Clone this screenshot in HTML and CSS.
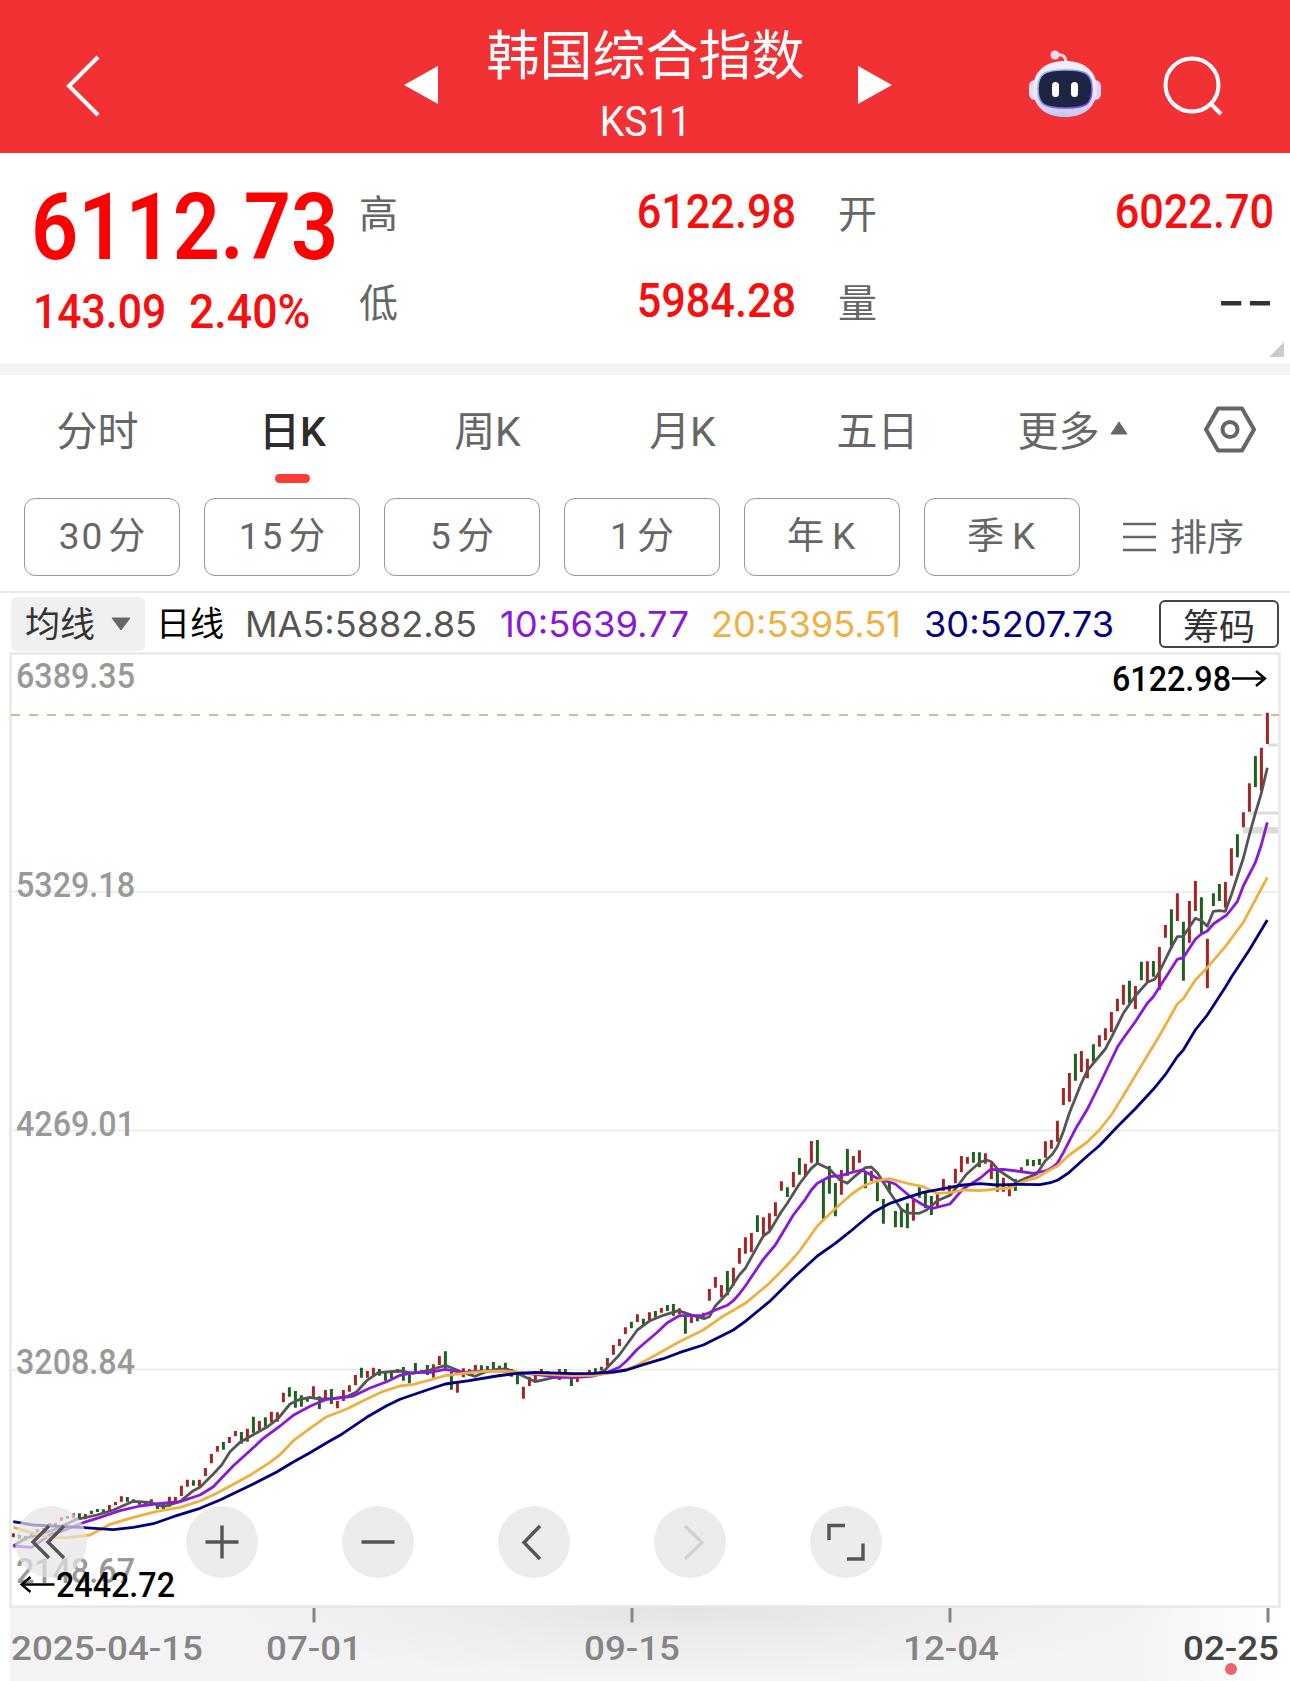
FILE: index.html
```html
<!DOCTYPE html>
<html lang="zh-CN">
<head>
  <meta charset="UTF-8" />
  <meta name="viewport" content="width=device-width, initial-scale=1.0" />
  <title>韩国综合指数 KS11</title>
  <link rel="stylesheet" href="styles.css">
</head>
<body>
  <header class="topbar">
    <svg class="back" width="40" height="66" viewBox="0 0 40 66"><path d="M34 4L5 33L34 62" /></svg>
    <svg class="prev" width="34" height="38" viewBox="0 0 34 38"><path d="M34 0V38L0 19Z" /></svg>
    <div class="title">
      <h1>韩国综合指数</h1>
      <p>KS11</p>
    </div>
    <svg class="next" width="34" height="38" viewBox="0 0 34 38"><path d="M0 0V38L34 19Z" /></svg>
    <svg class="robot" width="74" height="68" viewBox="0 0 74 68">
      <defs>
        <linearGradient id="shell" x1="0" y1="0" x2="0" y2="1">
          <stop offset="0" stop-color="#f3eef9" />
          <stop offset=".6" stop-color="#ece7fa" />
          <stop offset="1" stop-color="#c5c5f3" />
        </linearGradient>
        <linearGradient id="rim" x1="0" y1="0" x2="1" y2="1">
          <stop offset="0" stop-color="#8fd0ef" />
          <stop offset="1" stop-color="#7a35dd" />
        </linearGradient>
      </defs>
      <path d="M28 5Q38 3 38 13" fill="none" stroke="#f0d5e8" stroke-width="3" />
      <circle cx="27" cy="5" r="4.5" fill="#f3dcef" />
      <rect x="1" y="30" width="14" height="20" rx="6" fill="#e3defa" />
      <rect x="59" y="30" width="14" height="20" rx="6" fill="#d9d3f8" />
      <path d="M37 11C56 11 69 21 69 39C69 57 56 67 37 67C18 67 5 57 5 39C5 21 18 11 37 11Z" fill="url(#shell)" />
      <path d="M37 20C57 20 64 23 64 39C64 55 57 58 37 58C17 58 10 55 10 39C10 23 17 20 37 20Z" fill="#1d2444" stroke="url(#rim)" stroke-width="1.6" />
      <rect x="24" y="32" width="7" height="15" rx="3.5" fill="#fff" />
      <rect x="43" y="32" width="7" height="15" rx="3.5" fill="#fff" />
    </svg>
    <svg class="search" width="62" height="62" viewBox="0 0 62 62"><circle cx="30" cy="30" r="26.5" /><path d="M48 48L59 59" /></svg>
  </header>

  <section class="quote">
    <div class="price">
      <div class="last num">6112.73</div>
      <div class="change"><span class="num">143.09</span><span class="num">2.40%</span></div>
    </div>
    <div class="cell"><span>高</span><b class="num">6122.98</b></div>
    <div class="cell"><span>开</span><b class="num">6022.70</b></div>
    <div class="cell"><span>低</span><b class="num">5984.28</b></div>
    <div class="cell"><span>量</span><b class="num empty">--</b></div>
    <span class="corner"></span>
  </section>

  <nav class="tabs">
    <a>分时</a>
    <a class="active">日K</a>
    <a>周K</a>
    <a>月K</a>
    <a>五日</a>
    <a class="more">更多<svg width="18" height="14" viewBox="0 0 18 14"><path d="M9 1L17 13H1Z" /></svg></a>
    <svg class="setting" width="52" height="47" viewBox="0 0 52 47">
      <path d="M14 2.5H38L50 23.5L38 44.5H14L2 23.5Z" />
      <circle cx="26" cy="23.5" r="7.5" />
    </svg>
  </nav>

  <div class="periods">
    <button><span>30</span>分</button>
    <button><span>15</span>分</button>
    <button><span>5</span>分</button>
    <button><span>1</span>分</button>
    <button>年<span class="k">K</span></button>
    <button>季<span class="k">K</span></button>
    <a class="sort">
      <svg width="33" height="32" viewBox="0 0 33 32"><path d="M0 3H33M0 16H33M0 29H33" /></svg><span>排序</span>
    </a>
  </div>

  <div class="ma-bar">
    <span class="ma-select"><span>均线</span><svg width="20" height="14" viewBox="0 0 20 14"><path d="M1 1H19L10 13Z" /></svg></span>
    <span class="ma-type">日线</span>
    <svg class="ma-values" width="880" height="54" viewBox="0 0 880 54">
      <text class="ma5" x="7" y="40" textLength="232" lengthAdjust="spacingAndGlyphs">MA5:5882.85</text>
      <text class="ma10" x="262" y="40" textLength="189" lengthAdjust="spacingAndGlyphs">10:5639.77</text>
      <text class="ma20" x="473" y="40" textLength="190" lengthAdjust="spacingAndGlyphs">20:5395.51</text>
      <text class="ma30" x="686" y="40" textLength="190" lengthAdjust="spacingAndGlyphs">30:5207.73</text>
    </svg>
    <button class="chips">筹码</button>
  </div>

  <main class="chart">
    <svg class="plot" width="1290" height="1029" viewBox="0 652 1290 1029">
      <defs>
        <linearGradient id="axis-x">
          <stop offset="0" stop-color="#f4f4f4" />
          <stop offset=".88" stop-color="#f4f4f4" />
          <stop offset="1" stop-color="#fff" />
        </linearGradient>
        <radialGradient id="axis-shade" cx=".5" cy="0" r="1" gradientTransform="translate(.5 0) scale(.5 1) translate(-.5 0)">
          <stop offset="0" stop-color="#000" stop-opacity=".07" />
          <stop offset=".5" stop-color="#000" stop-opacity=".03" />
          <stop offset="1" stop-color="#000" stop-opacity="0" />
        </radialGradient>
      </defs>
      <rect x="10" y="1607" width="1280" height="74" fill="url(#axis-x)" />
      <rect x="190" y="1607" width="1000" height="74" fill="url(#axis-shade)" />

      <path class="frame" d="M10.5 653.5H1279.5V1606.5H10.5Z" />
      <path class="grid" d="M12 891.8H1278M12 1130.5H1278M12 1369.5H1278" />

      <g class="y-label">
        <text x="16" y="688" textLength="119" lengthAdjust="spacingAndGlyphs">6389.35</text>
        <text x="16" y="897" textLength="119" lengthAdjust="spacingAndGlyphs">5329.18</text>
        <text x="16" y="1136" textLength="119" lengthAdjust="spacingAndGlyphs">4269.01</text>
        <text x="16" y="1374" textLength="119" lengthAdjust="spacingAndGlyphs">3208.84</text>
        <text x="16" y="1583" textLength="119" lengthAdjust="spacingAndGlyphs">2148.67</text>
      </g>

      <path class="current" d="M11 715H1279" />
      <path d="M1268 743.5H1278V746.5H1268ZM1250 811.5H1278V814.5H1250ZM1243 827H1278V833.5H1243Z" fill="#dcdcdc" />

      <path class="bars up" id="up" />
      <path class="bars down" id="down" />
      <polyline class="line ma5" id="ma5" />
      <polyline class="line ma10" id="ma10" />
      <polyline class="line ma20" id="ma20" />
      <polyline class="line ma30" id="ma30" />

      <text class="mark" x="1112" y="691" textLength="119" lengthAdjust="spacingAndGlyphs">6122.98</text>
      <path class="arrow" d="M1232 678.5H1264M1256 671L1265 678.5L1256 686" />

      <path class="ticks" d="M314 1608V1622.5M632 1608V1622.5M950 1608V1622.5M1268 1608V1622.5" />
      <g class="x-label">
        <text x="11" y="1660" textLength="192" lengthAdjust="spacingAndGlyphs">2025-04-15</text>
        <text x="266" y="1660" textLength="96" lengthAdjust="spacingAndGlyphs">07-01</text>
        <text x="584" y="1660" textLength="96" lengthAdjust="spacingAndGlyphs">09-15</text>
        <text x="903" y="1660" textLength="96" lengthAdjust="spacingAndGlyphs">12-04</text>
        <text class="today" x="1183" y="1660" textLength="96" lengthAdjust="spacingAndGlyphs">02-25</text>
      </g>
      <circle cx="1231" cy="1669" r="6" fill="#ec6467" />
    </svg>

    <div class="controls">
      <svg viewBox="0 0 72 72"><path d="M34 20L18 36L34 52M49 20L33 36L49 52" /></svg>
      <svg viewBox="0 0 72 72"><path d="M19.5 36H52.5M36 19.5V52.5" /></svg>
      <svg viewBox="0 0 72 72"><path d="M19.5 36H52.5" /></svg>
      <svg viewBox="0 0 72 72"><path d="M42 20L26 36.5L42 53" /></svg>
      <svg class="off" viewBox="0 0 72 72"><path d="M31 20L48 36.5L31 53" /></svg>
      <svg viewBox="0 0 72 72"><path d="M19 34V19.5H35M37 53H53V37.5" /></svg>
    </div>

    <svg class="low-mark" width="170" height="50" viewBox="20 1560 170 50">
      <path class="arrow" d="M22 1584.5H54.5M30.5 1577L21.5 1584.5L30.5 1592" />
      <text class="mark" x="56" y="1597" textLength="119" lengthAdjust="spacingAndGlyphs">2442.72</text>
    </svg>
  </main>
  <script src="chart.js"></script>
</body>
</html>
```

FILE: styles.css
```css
* {
  margin: 0;
  padding: 0;
  box-sizing: border-box;
}

body {
  width: 1290px;
  height: 1681px;
  overflow: hidden;
  background: #fff;
  color: #666;
  font-family: Roboto, "Noto Sans CJK SC", sans-serif;
}

svg {
  display: block;
  flex: none;
}

/* top bar */
.topbar {
  display: flex;
  align-items: center;
  height: 153px;
  padding: 18px 63px 0 64px;
  background: #f23135;
  color: #fff;
}

.topbar svg {
  fill: #fff;
}

.topbar .back,
.topbar .search {
  fill: none;
  stroke: #fff;
  stroke-width: 4;
}

.prev {
  margin-left: 300px;
}

.topbar .prev,
.topbar .next {
  margin-bottom: 2px;
}

.title {
  width: 420px;
  padding-right: 5px;
  text-align: center;
  margin-top: 6px;
}

.title h1 {
  font-size: 53px;
  font-weight: 400;
  line-height: 66px;
}

.title p {
  font-size: 42px;
  line-height: 64px;
  transform: scaleX(0.93);
}

.robot {
  margin: 0 0 4px 136px;
}

.search {
  margin-left: 60px;
}

/* quote */
.quote {
  position: relative;
  display: grid;
  grid-template-columns: 326px 437px 478px;
  grid-template-rows: 89px 89px;
  height: 222px;
  padding: 14px 16px 0 33px;
  border-bottom: 12px solid #f4f4f4;
}

.num {
  display: inline-block;
  color: #f50f0f;
  font-weight: 500;
  transform: scaleX(0.9);
  transform-origin: right;
  white-space: nowrap;
}

.price {
  grid-row: span 2;
}

.price .num {
  transform-origin: left;
}

.price .last {
  display: block;
  margin: 15px 0 0 -2px;
  font-size: 93px;
  line-height: 92px;
  font-weight: 600;
  color: #f00;
  transform: scaleX(0.89);
}

.change {
  display: flex;
  gap: 11px;
  margin-top: -8px;
  font-size: 48px;
  line-height: 92px;
}

.change .num:first-child {
  width: 145px;
}

.change .num {
  transform: scaleX(0.89);
}

.change .num:last-child {
  transform: scaleX(0.93);
}

.cell {
  display: flex;
  align-items: center;
  justify-content: space-between;
  font-size: 39px;
}

.cell > span {
  margin-top: -2px;
}

.cell .num {
  font-size: 48px;
}

.cell:nth-child(odd) {
  margin-left: 42px;
}

.cell .empty {
  color: #333;
  font-family: Inter, sans-serif;
  transform: scaleX(1.3);
}

.corner {
  position: absolute;
  right: 6px;
  bottom: 6px;
  border-left: 15px solid transparent;
  border-bottom: 15px solid #ccc;
}

/* tabs */
.tabs {
  display: flex;
  align-items: center;
  height: 109px;
}

.tabs a {
  position: relative;
  width: 195px;
  padding-bottom: 4px;
  text-align: center;
  font-size: 41px;
}

.tabs .active {
  color: #2c2c2c;
  font-weight: 500;
}

.active::after {
  content: "";
  position: absolute;
  left: 80px;
  bottom: -21px;
  width: 35px;
  height: 9px;
  border-radius: 5px;
  background: #fa3c34;
}

.more {
  display: flex;
  align-items: center;
  justify-content: center;
  gap: 10px;
}

.more svg,
.ma-select svg {
  fill: #666;
  stroke: #666;
  stroke-linejoin: round;
}

.setting {
  margin-left: 34px;
  fill: none;
  stroke: #666;
  stroke-width: 4;
  stroke-linejoin: round;
}

/* periods */
.periods {
  display: flex;
  align-items: center;
  gap: 24px;
  height: 109px;
  padding: 0 24px 2px;
  border-bottom: 2px solid #e8e8e8;
}

.periods button {
  width: 156px;
  height: 78px;
  border: 1.5px solid #999;
  border-radius: 11px;
  background: none;
  color: #666;
  font: 37px/72px Roboto, "Noto Sans CJK SC", sans-serif;
}

.periods button span {
  margin-right: 4px;
  letter-spacing: 2px;
}

.periods button .k {
  margin: 0 0 0 8px;
}

.sort {
  display: flex;
  align-items: center;
  gap: 14px;
  margin-left: 19px;
  font-size: 37px;
}

.sort span {
  margin-top: -3px;
}

.sort svg {
  stroke: #666;
  stroke-width: 2.6;
}

/* moving averages */
.ma-bar {
  display: flex;
  align-items: center;
  height: 59px;
  padding: 2px 11px 0;
}

.ma-select {
  display: flex;
  align-items: center;
  gap: 16px;
  width: 134px;
  height: 54px;
  padding-left: 14px;
  border-radius: 6px;
  background: #f0f0f0;
  color: #333;
  font-size: 35px;
}

.ma-select span,
.ma-type {
  margin-top: -4px;
}

.ma-type {
  width: 80px;
  padding-left: 11px;
  color: #000;
  font-size: 34px;
  white-space: nowrap;
}

.ma-values {
  margin-left: 13px;
  font-family: Inter, Roboto, sans-serif;
  font-size: 35px;
}

text.ma5 { fill: #555; }
text.ma10 { fill: #8a18d8; }
text.ma20 { fill: #f0b040; }
text.ma30 { fill: #000080; }

.chips {
  width: 120px;
  height: 48px;
  margin-left: auto;
  border: 2px solid #444;
  border-radius: 6px;
  background: #fff;
  color: #333;
  font: 36px/38px "Noto Sans CJK SC", sans-serif;
}

/* chart */
.chart {
  position: relative;
}

.frame,
.grid {
  fill: none;
  stroke: #e8e8e8;
  stroke-width: 2.5;
}

.grid {
  stroke-width: 1.6;
}

.y-label,
.x-label,
.mark {
  font-size: 35px;
  font-weight: 500;
  fill: #999;
}

.x-label {
  font-size: 34px;
  fill: #858585;
}

.x-label .today {
  fill: #444;
}

.mark {
  fill: #000;
}

.arrow {
  fill: none;
  stroke: #000;
  stroke-width: 2.4;
}

.current {
  stroke: #cfa277;
  stroke-width: 1.4;
  stroke-dasharray: 9 9;
}

.bars {
  stroke-width: 3;
}

.up { stroke: #a52424; }
.down { stroke: #1c621c; }

.line {
  fill: none;
  stroke-width: 2.8;
  stroke-linejoin: round;
}

.line.ma5 { stroke: #555; }
.line.ma10 { stroke: #8a18d8; }
.line.ma20 { stroke: #f0b040; }
.line.ma30 { stroke: #000080; }

.ticks {
  stroke: #858585;
  stroke-width: 3;
}

/* buttons floating over the chart */
.controls {
  position: absolute;
  left: 15px;
  top: 854px;
  display: flex;
  gap: 84px;
}

.controls svg {
  width: 72px;
  height: 72px;
  border-radius: 50%;
  background: rgba(228, 228, 228, 0.7);
  fill: none;
  stroke: #555;
  stroke-width: 3.4;
}

.controls svg:first-child {
  margin-right: 15px;
}

.controls .off {
  stroke: #d2d2d2;
}

.low-mark {
  position: absolute;
  left: 20px;
  top: 908px;
}
```

FILE: chart.js
```js
// Daily bars, high-low, in thirds of a pixel below each block's base. r = up, g = down.
const BAR_BLOCKS = [
  [1300, 'r700-712 g704-716 r708-722 r702-714 r688-697 g684-690 r670-680 g668-676 r652-662 g648-656 r640-655 g640-656 r642-658 g632-642 g627-636 g628-637 r615-630 r606-616 r589-605 g591-605 g598-606 g604-614 g604-612 r598-610 g610-627 g612-627 r590-620 r591-606 r557-588 r539-560 g541-557 r539-560 r504-528 r462-490 r438-455 g426-449 r411-429 r393-409 g396-431 r386-425 g350-398 r363-391 g352-380 r335-367 r337-365 r278-307 g262-290 g273-323 g286-320 g293-305 r259-290 g289-327 r270-298 g267-312 r303-325 r270-303 r256-275 r225-256 g203-233 r213-233 r203-225 g207-227 g215-242 g212-235 r207-218 g201-242 g215-250 g189-217 r210-218 g195-225'],
  [1150, 'r643-683 r618-645 g604-655 g665-719 r695-728 r655-682 r658-678 r645-665 g646-665 g648-660 g636-665 g647-660 g638-660 g657-680 g665-703 r710-746 r680-708 r668-692 r657-675 g664-680 r670-684 r657-690 g657-675 g682-708 r680-696 r672-684 r660-675 g655-668 r650-660 r624-648 r585-614 r567-588 r532-552 g515-535 r493-516 g506-524 r487-510 g483-502 r474-488 g465-483 g462-497 r475-492 g494-551 r500-519 g500-514 r488-502 r417-452 r381-413 r405-442 g363-436 r353-407 r294-341 r262-311 r249-306 g196-246 r202-255 r190-240 r157-199 r94-122 g112-141 r66-112 g24-74 r41-80'],
  [1110, 'r93-158 g90-160 g208-328 g168-251 g219-319 r180-254 g117-197 r138-182 r121-158 g188-235 r182-213 g217-274 g267-341 g215-245 g303-352 g300-352 g280-355 r270-332 g232-263 g245-295 g258-315 r250-290 r207-242 r225-245 r176-220 r138-187 r141-161 g126-158 g127-172 r130-161 r160-207 g180-245 r203-245 r222-259 g207-243 r172-185 g148-167 g150-169 g147-165 r94-143'],
  [850, 'r870-896 r812-875 r714-765 r669-755 g611-692 r603-666 r626-685 g583-635 r556-590 r535-571 r486-546 r446-484 r404-464 g392-460 r408-477 g335-391 r334-396 g333-380 r291-420 r225-263 g178-295 r130-213 g215-392 r153-278 r93-183 g142-250 r266-415 g130-168 g102-153 r96-173'],
  [640, 'r625-707 g583-652 r517-562 r430-515 g348-441 r323-452 r218-312']
];

// Moving averages: [base x, base y, points in thirds of a pixel]
const LINES = {
  ma5: [
    [0, 1300, '40,738 75,715 115,705 160,690 230,658 290,645 340,630 400,604 450,607 490,620 540,605 580,572 600,562 640,522 665,495 690,455 720,427 770,398 800,382 835,355 870,312 900,298 930,292 960,297 1000,296 1040,290 1070,275 1100,242 1135,218 1200,213 1240,220'],
    [430, 1150, '0,660 46,646 90,664 136,679 160,668 200,658 230,657 262,670 316,695 370,683 430,680 500,672 525,660 568,615 622,540 660,512 700,496 745,482 790,497 822,506 838,500 856,468 892,430 928,375 946,355 964,322 1000,258 1018,245 1054,185 1072,160 1108,102 1144,55'],
    [750, 1110, '202,160 238,177 270,210 292,220 310,203 346,173 364,171 382,188 418,245 454,298 472,309 508,310 530,300 562,272 600,256 625,225 650,192 690,157 710,150 724,155 745,180 800,217 830,203 860,192'],
    [860, 850, '556,932 576,914 592,890 610,845 628,790 646,745 664,700 682,662 700,640 736,597 754,563 790,490 826,438 862,397 884,388 898,366 934,292 952,260 970,259 1006,205 1025,212 1042,229 1060,184 1078,182 1096,184'],
    [1090, 640, '424,765 460,655 478,585 496,520 514,460 532,383']
  ],
  ma10: [
    [0, 1300, '40,738 95,742 130,718 150,704 200,688 250,668 300,652 360,632 420,618 480,610 540,605 600,585 640,560 700,497 750,452 790,415 840,378 880,346 930,319 980,298 1040,291 1060,288 1110,264 1160,245 1200,226 1240,218'],
    [430, 1150, '0,667 46,658 100,668 136,664 200,662 250,666 316,673 370,680 430,683 490,678 532,667 568,652 590,632 622,598 680,548 712,518 748,497 820,496 856,480 892,466 910,452 928,432 946,408 1000,328 1036,285 1090,195 1126,148 1144,120'],
    [750, 1110, '202,220 238,200 274,197 310,186 335,180 364,195 390,210 418,216 436,222 454,237 490,267 520,285 548,295 600,282 640,236 690,205 720,179 760,178 800,183 850,190'],
    [860, 850, '560,962 580,950 592,940 610,908 646,838 682,778 718,705 754,630 772,592 790,565 826,515 862,460 880,440 916,384 952,328 970,323 1006,268 1024,252 1042,243 1060,222 1100,195'],
    [1090, 640, '442,785 460,738 496,668 514,615 532,547']
  ],
  ma20: [
    [0, 1300, '40,682 75,692 100,700 150,712 200,713 270,705 330,673 400,652 470,634 540,622 600,603 650,580 700,553 750,526 810,487 840,464 880,422 930,385 980,350 1040,327 1100,297 1150,274 1200,258 1240,253'],
    [430, 1150, '0,690 46,677 100,670 160,664 220,663 280,668 316,671 370,674 430,677 490,676 550,668 590,658 622,645 660,625 748,575 820,540 874,502 946,460 1018,400 1072,345 1108,304 1162,228'],
    [750, 1110, '238,313 274,280 310,248 346,225 382,212 418,206 440,212 480,222 520,230 560,250 600,248 640,240 690,242 740,237 780,234 820,215 860,203'],
    [860, 850, '565,962 592,948 628,915 682,876 718,840 754,795 790,737 862,617 898,558 952,462 970,446 1006,390 1042,353 1096,290 1150,217 1186,150 1222,82']
  ],
  ma30: [
    [0, 1300, '40,665 100,675 160,678 240,682 340,689 400,682 460,671 520,650 600,625 660,600 760,552 830,516 880,486 930,458 980,428 1020,406 1100,352 1160,317 1200,298'],
    [430, 1150, '0,717 46,702 118,692 200,678 262,670 316,667 430,671 490,670 550,666 590,660 640,644 700,626 748,608 820,585 856,567 910,540 946,514 1018,455 1090,384 1162,318 1216,280 1260,245'],
    [750, 1110, '330,340 370,307 420,280 470,263 520,247 580,236 640,225 690,221 740,225 800,223 870,224'],
    [860, 850, '575,997 594,990 628,967 682,918 718,887 772,830 826,776 880,718 916,674 952,620 970,600 1006,540 1042,495 1096,412 1114,382 1168,300 1222,210']
  ]
};

const paths = { r: '', g: '' };
let day = 0;
for (const [base, bars] of BAR_BLOCKS) {
  for (const bar of bars.split(' ')) {
    const [high, low] = bar.slice(1).split('-');
    const x = 13.4 + day * 6;
    paths[bar[0]] += `M${x.toFixed(1)} ${(base + high / 3).toFixed(1)}V${(base + low / 3).toFixed(1)}`;
    day++;
  }
}
document.getElementById('up').setAttribute('d', paths.r);
document.getElementById('down').setAttribute('d', paths.g);

for (const id in LINES) {
  const points = LINES[id].flatMap(([bx, by, list]) =>
    list.split(' ').map(p => {
      const [x, y] = p.split(',');
      return `${(bx + x / 3).toFixed(1)},${(by + y / 3).toFixed(1)}`;
    })
  );
  document.getElementById(id).setAttribute('points', points.join(' '));
}
```
